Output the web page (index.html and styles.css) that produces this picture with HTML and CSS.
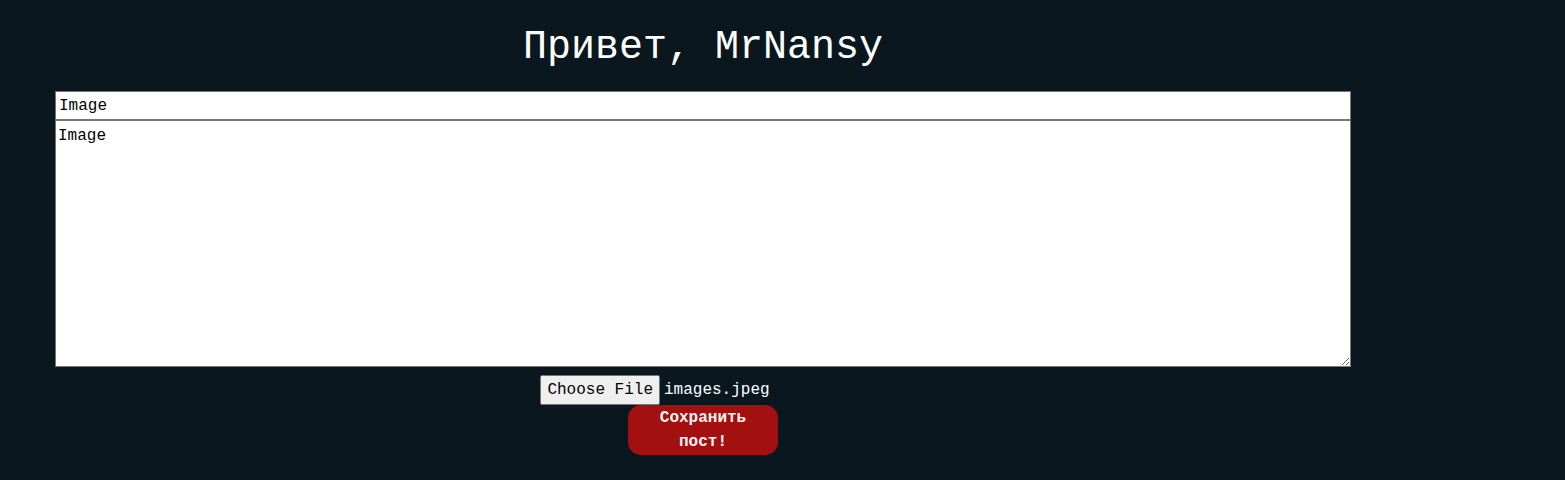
FILE: index.html
```html
<!DOCTYPE html>
<html lang="ru">
<head>
<meta charset="utf-8">
<title>Новый пост</title>
<link rel="stylesheet" href="styles.css">
</head>
<body>
<main class="page">
  <h1 class="greeting">Привет, MrNansy</h1>
  <form class="post-form">
    <input class="title-input" type="text" value="Image">
    <textarea class="body-input">Image</textarea>
    <div class="file-row">
      <span class="file-button">Choose File</span><span class="file-name">images.jpeg</span>
    </div>
    <button class="save-button" type="button">Сохранить пост!</button>
  </form>
</main>
</body>
</html>
```
FILE: styles.css
```css
html, body {
  margin: 0;
  padding: 0;
  background: #0a171f;
  height: 100%;
}
body {
  font-family: "Liberation Mono", "DejaVu Sans Mono", monospace;
  color: #ffffff;
}
.page {
  width: 1296px;
  margin-left: 55px;
  padding-top: 1px;
}
.greeting {
  margin: 22px 0 0;
  height: 68px;
  font-size: 40px;
  font-weight: normal;
  text-align: center;
  line-height: 50px;
}
.post-form {
  display: flex;
  flex-direction: column;
  align-items: center;
}
.title-input {
  box-sizing: border-box;
  width: 1296px;
  height: 30px;
  margin: 0;
  padding: 0 3px;
  border: 1px solid #767676;
  border-bottom: 2px solid #767676;
  background: #fff;
  color: #000;
  font-family: inherit;
  font-size: 16px;
}
.body-input {
  box-sizing: border-box;
  width: 1296px;
  height: 246px;
  margin: 0;
  padding: 6px 2px 3px;
  border: 1px solid #767676;
  border-top: none;
  background: #fff;
  color: #000;
  font-family: inherit;
  font-size: 16px;
  line-height: 19px;
  resize: both;
}
.file-row {
  display: flex;
  align-items: center;
  margin-top: 8px;
  margin-right: 96px;
  height: 30px;
}
.file-button {
  box-sizing: border-box;
  height: 30px;
  padding: 0 6px;
  display: flex;
  align-items: center;
  background: #efefef;
  color: #000;
  border: 1px solid #767676;
  border-radius: 2px;
  font-size: 16px;
}
.file-name {
  margin-left: 4px;
  font-size: 16px;
  color: #fff;
}
.save-button {
  width: 150px;
  height: 50px;
  margin: 0;
  padding: 0 12px;
  border: none;
  border-radius: 13px;
  background: #a21010;
  color: #f4f4f4;
  font-family: inherit;
  font-size: 16px;
  font-weight: bold;
  line-height: 24px;
}
```
